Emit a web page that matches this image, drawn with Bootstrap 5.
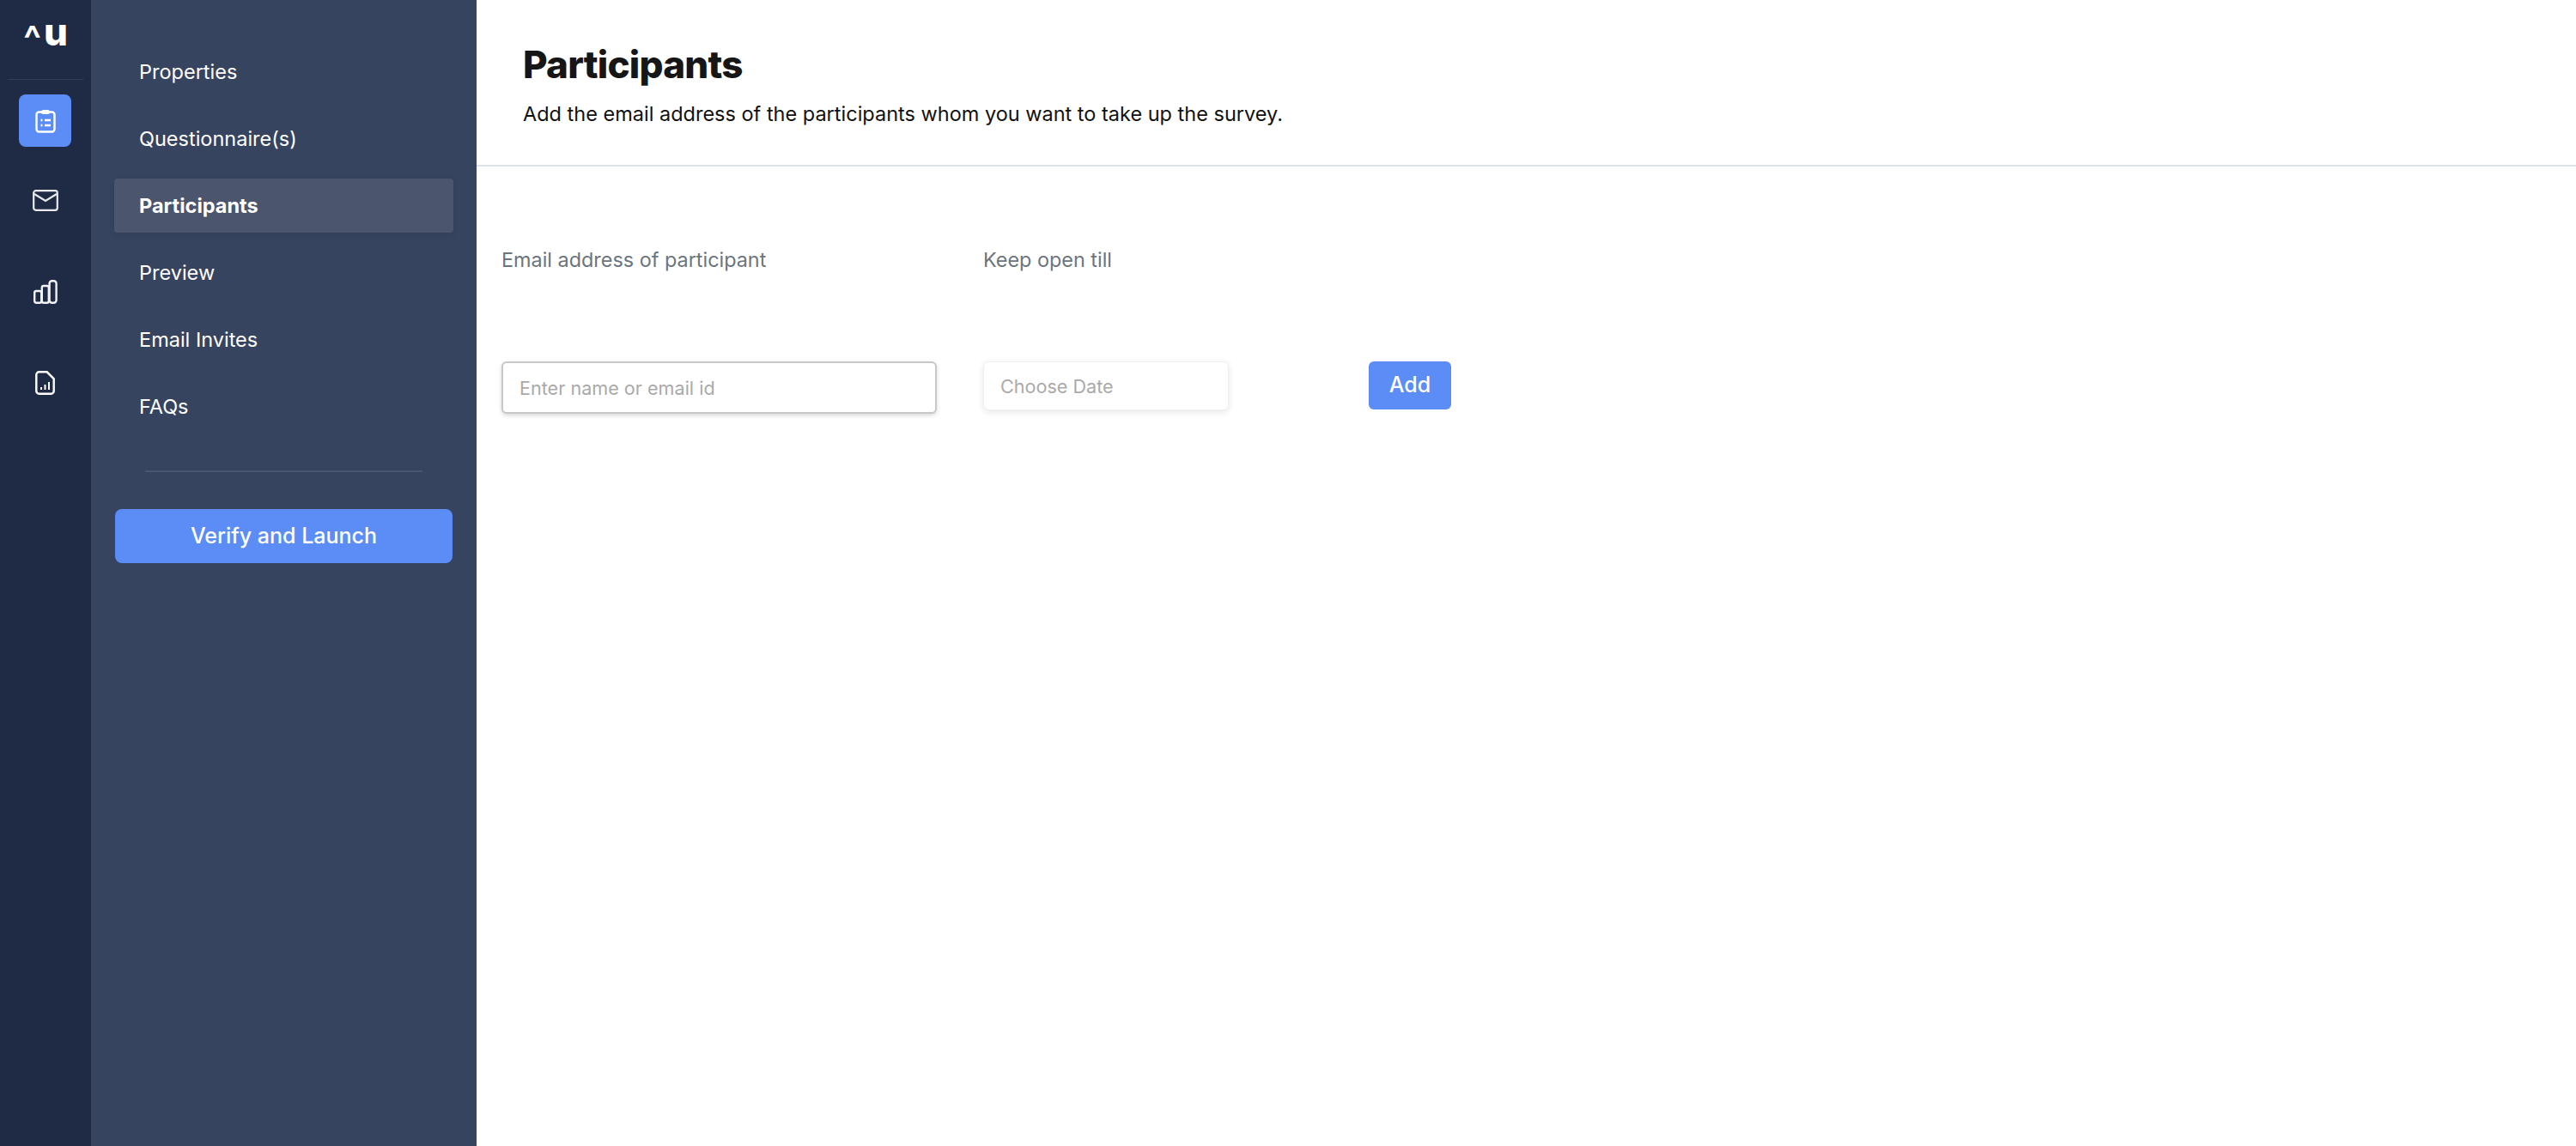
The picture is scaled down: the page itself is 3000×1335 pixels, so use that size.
<!doctype html>
<html lang="en">
<head>
<meta charset="utf-8">
<title>Participants</title>
<link href="https://cdn.jsdelivr.net/npm/bootstrap@5.3.0/dist/css/bootstrap.min.css" rel="stylesheet">
<style>
html,body{height:100%}
body{font-family:Inter,"Liberation Sans",sans-serif;background:#fff;overflow:hidden}
.shell{height:1335px}
.rail{width:106px;background:#1f2b45}
.brand{height:93px;margin:0 9px;border-bottom:1px solid #2f3b56;color:#fff;line-height:1;padding-top:22px}
.brand-caret{font-size:44px;font-weight:600;margin-top:1px;height:36px;margin-right:3px}
.brand-u{font-size:44px;font-weight:800;margin-top:-7px;font-family:Inter,sans-serif}
.rail-btn{width:61px;height:61px;margin-left:22px;color:#fff;border-radius:8px}
.rail-btn.on{background:#5c8df6;margin-top:17px}
.rail-mail{margin-top:32px}
.rail-chart{margin-top:45px}
.rail-doc{margin-top:45px}
.side{width:449px;background:#37445f;padding:52px 27px 0}
.side-link{display:block;height:63px;line-height:63px;padding:0 29px;margin-bottom:15px;font-size:23.5px;color:#fff;text-decoration:none;border-radius:4px}
.side-link.on{background:#4b556e;font-weight:700;box-shadow:0 2px 6px rgba(20,30,50,.12)}
.side-rule{margin:43px 36px 0;border-top:2px solid #4a566f;opacity:1}
.launch{display:block;width:393px;height:63px;margin:43px 0 0 1px;background:#5c8df6;border:0;border-radius:8px;color:#fff;font-size:25px;font-weight:500;padding:0}
.head{height:194px;border-bottom:2px solid #dee2e6;padding:46px 54px 0}
.head h1{font-size:44px;font-weight:800;letter-spacing:-.8px;color:#161616;line-height:58px;margin:0}
.head p{font-size:23.5px;color:#111;margin:13px 0 0;line-height:32px}
.form-area{padding:0 29px}
.field-label{font-size:23.4px;color:#6c757d;margin:0;line-height:32px;padding-top:93px}
.mail-col{width:561px}
.date-col{width:449px}
.mail-box{width:507px;height:61px;margin-top:102px;border:2px solid #c8c8c8;border-radius:6px;box-shadow:0 2px 5px rgba(0,0,0,.16);font-size:21.6px;padding:0 19px}
.date-box{width:286px;height:57px;margin-top:102px;border:1px solid #f0f0f0;border-radius:6px;box-shadow:0 2px 8px rgba(0,0,0,.1);font-size:21.6px;padding:0 19px}
.mail-box::placeholder,.date-box::placeholder{color:#aaa;opacity:1}
.mail-box:focus,.date-box:focus{box-shadow:none;outline:0}
.add-col{padding-top:227px}
.add-btn{display:block;width:96px;height:56px;background:#5c8df6;border:0;border-radius:6px;color:#fff;font-size:25px;font-weight:500;padding:0}
</style>
</head>
<body>
<div class="shell d-flex">
  <nav class="rail flex-shrink-0">
    <div class="brand d-flex justify-content-center align-items-start">
      <span class="brand-caret">^</span><span class="brand-u">u</span>
    </div>
    <div class="rail-btn on d-flex align-items-center justify-content-center">
      <svg width="24" height="28" viewBox="0 0 24 28" fill="none" stroke="#fff" stroke-width="2.4"><rect x="1.5" y="3.5" width="21" height="23" rx="3"/><rect x="7" y="1" width="10" height="5" rx="2.5" fill="#fff" stroke="none"/><path d="M6.5 13h2M11 13h7M6.5 19h2M11 19h7"/></svg>
    </div>
    <div class="rail-btn rail-mail d-flex align-items-center justify-content-center">
      <svg width="30" height="25" viewBox="0 0 30 25" fill="none" stroke="#e8eaee" stroke-width="2.2"><rect x="1.2" y="1.2" width="27.6" height="22.6" rx="2.5"/><path d="M2 5l13 8 13-8"/></svg>
    </div>
    <div class="rail-btn rail-chart d-flex align-items-center justify-content-center">
      <svg width="28" height="28" viewBox="0 0 28 28" fill="none" stroke="#f0f2f5" stroke-width="2.4"><rect x="1.2" y="13" width="8" height="13.8" rx="2"/><rect x="9.8" y="7" width="8" height="19.8" rx="2"/><rect x="18.6" y="1.2" width="8" height="25.6" rx="3"/></svg>
    </div>
    <div class="rail-btn rail-doc d-flex align-items-center justify-content-center">
      <svg width="23" height="28" viewBox="0 0 23 28" fill="none" stroke="#fff" stroke-width="2.4"><path d="M4.5 1.3h9.2l8 8v14.2a3.2 3.2 0 0 1-3.2 3.2H4.5a3.2 3.2 0 0 1-3.2-3.2V4.5a3.2 3.2 0 0 1 3.2-3.2z"/><path d="M7 22v-3M11.5 22v-6M16 22v-9" stroke-width="2"/></svg>
    </div>
  </nav>
  <aside class="side flex-shrink-0">
    <a class="side-link" href="#">Properties</a>
    <a class="side-link" href="#">Questionnaire(s)</a>
    <a class="side-link on" href="#">Participants</a>
    <a class="side-link" href="#">Preview</a>
    <a class="side-link" href="#">Email Invites</a>
    <a class="side-link" href="#">FAQs</a>
    <hr class="side-rule">
    <button class="launch" type="button">Verify and Launch</button>
  </aside>
  <main class="flex-grow-1">
    <header class="head">
      <h1>Participants</h1>
      <p>Add the email address of the participants whom you want to take up the survey.</p>
    </header>
    <form class="form-area d-flex">
      <div class="mail-col">
        <label class="field-label d-block" for="m">Email address of participant</label>
        <input id="m" class="form-control mail-box" type="text" placeholder="Enter name or email id">
      </div>
      <div class="date-col">
        <label class="field-label d-block" for="d">Keep open till</label>
        <input id="d" class="form-control date-box" type="text" placeholder="Choose Date">
      </div>
      <div class="add-col">
        <button class="add-btn" type="button">Add</button>
      </div>
    </form>
  </main>
</div>
</body>
</html>
